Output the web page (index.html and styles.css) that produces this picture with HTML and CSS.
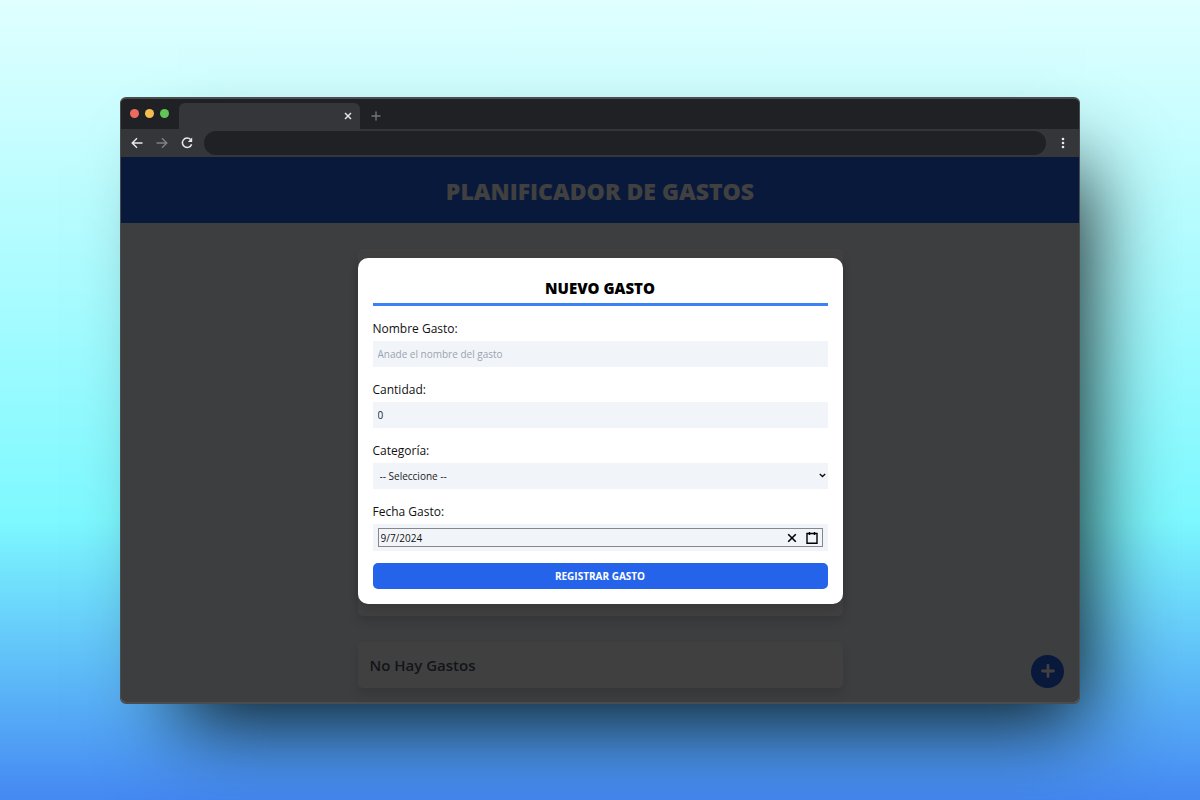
FILE: index.html
```html
<!DOCTYPE html>
<html lang="es">
<head>
<meta charset="utf-8">
<meta name="viewport" content="width=device-width, initial-scale=1">
<title>Planificador de Gastos</title>
<link rel="stylesheet" href="styles.css">
</head>
<body>
<div class="window">
  <div class="tabstrip">
    <div class="lights"><span class="light red"></span><span class="light yellow"></span><span class="light green"></span></div>
    <div class="tab">
      <button class="icon-btn" type="button" aria-label="Cerrar pestaña"><svg width="8" height="8" viewBox="0 0 8 8"><path d="M1 1l6 6M7 1l-6 6" stroke="#e4e5e7" stroke-width="1.5"/></svg></button>
    </div>
    <button class="icon-btn new-tab" type="button" aria-label="Nueva pestaña"><svg width="10" height="10" viewBox="0 0 10 10"><path d="M5 0.5v9M0.5 5h9" stroke="#737477" stroke-width="1.4"/></svg></button>
  </div>
  <div class="toolbar">
    <button class="icon-btn" type="button" aria-label="Atrás"><svg width="12" height="12" viewBox="0 0 12 12"><path d="M11.5 6H1.5M6 1.2L1.2 6 6 10.8" fill="none" stroke="#e8e9eb" stroke-width="1.4"/></svg></button>
    <button class="icon-btn" type="button" aria-label="Adelante"><svg width="12" height="12" viewBox="0 0 12 12"><path d="M0.5 6h10M6 1.2L10.8 6 6 10.8" fill="none" stroke="#7f8083" stroke-width="1.4"/></svg></button>
    <button class="icon-btn" type="button" aria-label="Recargar"><svg width="12" height="12" viewBox="0 0 12 12"><path d="M9.6 2.6A4.7 4.7 0 1 0 10.6 7.2" fill="none" stroke="#e8e9eb" stroke-width="1.5"/><path d="M11.2 0.6V5H6.8z" fill="#e8e9eb"/></svg></button>
    <input class="address" type="text" aria-label="Dirección">
    <button class="icon-btn" type="button" aria-label="Menú"><svg width="12" height="12" viewBox="0 0 12 12"><g fill="#e8e9eb"><circle cx="6" cy="2" r="1.3"/><circle cx="6" cy="6" r="1.3"/><circle cx="6" cy="10" r="1.3"/></g></svg></button>
  </div>
  <div class="page">
    <header class="header"><h1>Planificador de Gastos</h1></header>
    <main class="main">
      <section class="card budget"></section>
      <section class="card expenses"><h2>No Hay Gastos</h2></section>
    </main>
    <button class="fab" type="button" aria-label="Agregar gasto"><svg width="14" height="14" viewBox="0 0 14 14"><path d="M7 1.5v11M1.5 7h11" stroke="#fff" stroke-width="2.8" stroke-linecap="round"/></svg></button>
    <div class="overlay">
      <form class="modal">
        <h2 class="modal-title">Nuevo Gasto</h2>
        <div class="field">
          <label for="nombre">Nombre Gasto:</label>
          <input class="control" id="nombre" type="text" placeholder="Anade el nombre del gasto">
        </div>
        <div class="field">
          <label for="cantidad">Cantidad:</label>
          <input class="control" id="cantidad" type="text" inputmode="decimal" value="0">
        </div>
        <div class="field">
          <label for="categoria">Categoría:</label>
          <div class="select-wrap">
            <select class="control select" id="categoria"><option>-- Seleccione --</option></select>
            <svg class="chevron" width="7" height="5" viewBox="0 0 7 5"><path d="M0.8 0.9L3.5 3.6 6.2 0.9" fill="none" stroke="#111" stroke-width="1.4"/></svg>
          </div>
        </div>
        <div class="field">
          <label for="fecha">Fecha Gasto:</label>
          <div class="date">
            <div class="date-box">
              <input id="fecha" type="text" value="9/7/2024">
              <button class="icon-btn" type="button" aria-label="Borrar fecha"><svg width="10" height="10" viewBox="0 0 10 10"><path d="M1.2 1.2l7.6 7.6M8.8 1.2L1.2 8.8" stroke="#000" stroke-width="1.6"/></svg></button>
              <button class="icon-btn" type="button" aria-label="Abrir calendario"><svg width="12" height="12" viewBox="0 0 12 12"><path d="M1 1.5h10v9.7H1z" fill="none" stroke="#000" stroke-width="1.4"/><path d="M3.5 0v3M8.5 0v3" stroke="#000" stroke-width="1.4"/></svg></button>
            </div>
          </div>
        </div>
        <button class="submit" type="submit">Registrar Gasto</button>
      </form>
    </div>
  </div>
</div>
</body>
</html>
```
FILE: styles.css
```css
* { box-sizing: border-box; margin: 0; }

body {
  min-height: 100vh;
  display: flex;
  align-items: center;
  justify-content: center;
  padding: 32px 0;
  font-family: "Open Sans", "Noto Sans", sans-serif;
  background: linear-gradient(#e0ffff 0%, #7df9ff 65%, #4488f2 100%);
}

button, input, select { font: inherit; border: 0; padding: 0; }
button { cursor: pointer; }

.window {
  width: 80%;
  border: 1px solid #4b4c4d;
  border-width: 2px 1px;
  border-radius: 6px;
  overflow: hidden;
  background: #202124;
  box-shadow: 32px 44px 80px -26px rgba(0, 0, 0, 0.9);
}

.icon-btn {
  display: flex;
  align-items: center;
  justify-content: center;
  flex: none;
  background: none;
}

.tabstrip { display: flex; height: 30px; padding-top: 4px; }
.lights { display: flex; gap: 6px; padding: 6px 10px 0 9px; }
.light { width: 9px; height: 9px; border-radius: 50%; }
.red { background: #ee6a5f; }
.yellow { background: #f5bd4f; }
.green { background: #61c454; }
.tab {
  width: 181px;
  display: flex;
  align-items: center;
  justify-content: flex-end;
  padding-right: 8px;
  border-radius: 6px 6px 0 0;
  background: #35363a;
}
.new-tab { padding: 0 11px; }

.toolbar {
  display: flex;
  align-items: center;
  gap: 13px;
  padding: 2px 10px;
  background: #35363a;
}
.address {
  flex: 1;
  min-width: 0;
  height: 24px;
  margin: 0 -2px;
  padding: 0 12px;
  border-radius: 12px;
  background: #202124;
  color: #e8e9eb;
  font-size: 12px;
}

.page { position: relative; background: #f1f5f9; }
.header { padding: 18px 0 16px; background: #2563eb; text-align: center; }
.header h1 {
  font-size: 23px;
  line-height: 32px;
  font-weight: 800;
  text-transform: uppercase;
  color: #fff;
}

.main {
  display: grid;
  gap: 26px;
  max-width: 485px;
  margin: 0 auto;
  padding: 26px 0 14px;
}
.card {
  border-radius: 5px;
  background: #fff;
  box-shadow: 0 6px 10px rgba(0, 0, 0, 0.12);
}
.budget { min-height: 367px; }
.expenses { padding: 12px; }
.expenses h2 { font-size: 15px; line-height: 22px; font-weight: 600; color: #4b5563; }

.fab {
  position: absolute;
  right: 15px;
  bottom: 14px;
  width: 33px;
  height: 33px;
  display: flex;
  align-items: center;
  justify-content: center;
  border-radius: 50%;
  background: #2563eb;
}

.overlay {
  position: absolute;
  inset: 0;
  display: flex;
  align-items: center;
  justify-content: center;
  padding-top: 4px;
  background: rgba(0, 0, 0, 0.75);
}
.modal {
  width: 485px;
  max-width: 100%;
  display: grid;
  gap: 15px;
  padding: 15px;
  border-radius: 10px;
  background: #fff;
  box-shadow: 0 6px 10px rgba(0, 0, 0, 0.12);
}
.modal-title {
  padding: 5px 0;
  border-bottom: 3px solid #3b82f6;
  font-size: 15px;
  line-height: 20px;
  font-weight: 800;
  text-align: center;
  text-transform: uppercase;
  color: #000;
}
.field { display: grid; gap: 4px; }
.field label { font-size: 12px; line-height: 16px; color: #111; }
.control {
  width: 100%;
  height: 26px;
  padding: 0 5px;
  background: #f1f5f9;
  font-size: 10px;
  color: #222;
}
.control::placeholder { color: #9ca3af; }
.select-wrap { position: relative; display: flex; }
.select { appearance: none; padding: 0 7px; border-radius: 0; }
.chevron { position: absolute; right: 2px; top: 10px; pointer-events: none; }

.date { padding: 4px 5px; background: #f1f5f9; }
.date-box {
  display: flex;
  align-items: center;
  gap: 9px;
  height: 19px;
  padding: 0 4px 0 2px;
  border: 1px solid #85878a;
}
.date-box input {
  flex: 1;
  min-width: 0;
  height: 17px;
  background: none;
  font-size: 10px;
  color: #111;
}
.submit {
  height: 26px;
  margin-top: -3px;
  border-radius: 5px;
  background: #2563eb;
  font-size: 10px;
  font-weight: 700;
  text-transform: uppercase;
  color: #fff;
}
```
